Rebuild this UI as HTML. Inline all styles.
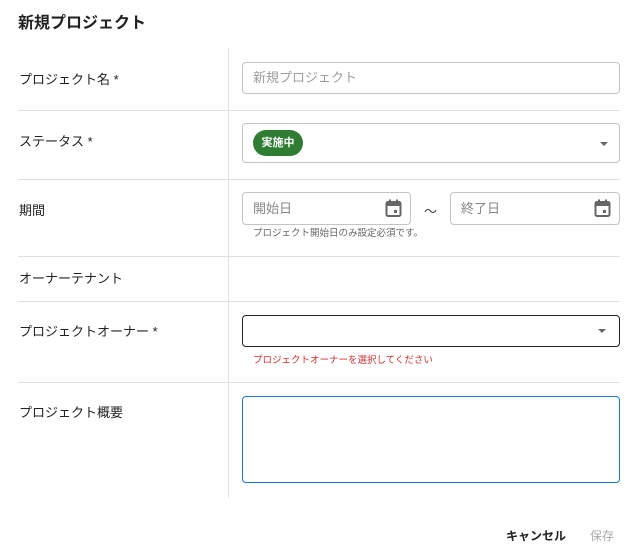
<!DOCTYPE html>
<html><head><meta charset="utf-8"><style>
*{box-sizing:border-box;margin:0;padding:0}
body{width:632px;height:553px;background:#fff;font-family:"Liberation Sans","Noto Sans CJK JP",sans-serif;color:#222;position:relative;overflow:hidden}
.a{position:absolute}
.lbl{position:absolute;left:19px;font-size:13px;line-height:16px;color:#222}
.hl{position:absolute;left:18px;width:602px;height:1px;background:#e0e0e0}
.box{position:absolute;border:1px solid #c4c4c4;border-radius:4px;background:#fff}
.ph{position:absolute;font-size:13px;color:#9e9e9e;line-height:16px}
.arrow{position:absolute;width:0;height:0;border-left:4px solid transparent;border-right:4px solid transparent;border-top:4px solid #666}
</style></head><body>
<div class="a" style="left:18px;top:14px;font-size:16px;font-weight:bold;line-height:20px;color:#222">新規プロジェクト</div>
<div class="a" style="left:228px;top:48px;width:1px;height:450px;background:#e0e0e0"></div>
<div class="hl" style="top:110px"></div>
<div class="hl" style="top:179px"></div>
<div class="hl" style="top:256px"></div>
<div class="hl" style="top:301px"></div>
<div class="hl" style="top:382px"></div>

<div class="lbl" style="top:72px">プロジェクト名 *</div>
<div class="lbl" style="top:134px">ステータス *</div>
<div class="lbl" style="top:203px">期間</div>
<div class="lbl" style="top:271px">オーナーテナント</div>
<div class="lbl" style="top:324px">プロジェクトオーナー *</div>
<div class="lbl" style="top:405px">プロジェクト概要</div>

<div class="box" style="left:242px;top:62px;width:378px;height:32px"></div>
<div class="ph" style="left:253px;top:70px">新規プロジェクト</div>

<div class="box" style="left:242px;top:123px;width:378px;height:40px"></div>
<div class="a" style="left:253px;top:130px;width:50px;height:26px;border-radius:13px;background:#2e7d32;color:#fff;font-size:11px;font-weight:bold;line-height:26px;text-align:center">実施中</div>
<div class="arrow" style="left:600px;top:142px"></div>

<div class="box" style="left:242px;top:192px;width:169px;height:33px"></div>
<div class="ph" style="left:253px;top:201px;color:#888">開始日</div>
<svg class="a" style="left:385px;top:199px" width="17" height="18" viewBox="0 0 17 18"><rect x="1.5" y="3" width="14" height="14" rx="1.5" fill="none" stroke="#666" stroke-width="2"/><rect x="1.5" y="3" width="14" height="4" fill="#666"/><rect x="4" y="0.5" width="2" height="4" fill="#666"/><rect x="11" y="0.5" width="2" height="4" fill="#666"/><rect x="9" y="11" width="3" height="3" fill="#666"/></svg>
<div class="a" style="left:424px;top:201px;font-size:13px;color:#444">〜</div>
<div class="box" style="left:450px;top:192px;width:170px;height:33px"></div>
<div class="ph" style="left:461px;top:201px;color:#888">終了日</div>
<svg class="a" style="left:594px;top:199px" width="17" height="18" viewBox="0 0 17 18"><rect x="1.5" y="3" width="14" height="14" rx="1.5" fill="none" stroke="#666" stroke-width="2"/><rect x="1.5" y="3" width="14" height="4" fill="#666"/><rect x="4" y="0.5" width="2" height="4" fill="#666"/><rect x="11" y="0.5" width="2" height="4" fill="#666"/><rect x="9" y="11" width="3" height="3" fill="#666"/></svg>
<div class="a" style="left:253px;top:228px;font-size:9.5px;color:#666;line-height:12px">プロジェクト開始日のみ設定必須です。</div>

<div class="box" style="left:242px;top:315px;width:378px;height:32px;border-color:#222"></div>
<div class="arrow" style="left:598px;top:329px"></div>
<div class="a" style="left:253px;top:355px;font-size:9.5px;color:#d32f2f;line-height:12px">プロジェクトオーナーを選択してください</div>

<div class="box" style="left:242px;top:396px;width:378px;height:87px;border-color:#1976d2"></div>

<div class="a" style="left:506px;top:528px;font-size:12px;font-weight:bold;color:#222;line-height:16px">キャンセル</div>
<div class="a" style="left:590px;top:528px;font-size:12px;color:#aaa;line-height:16px">保存</div>
</body></html>
